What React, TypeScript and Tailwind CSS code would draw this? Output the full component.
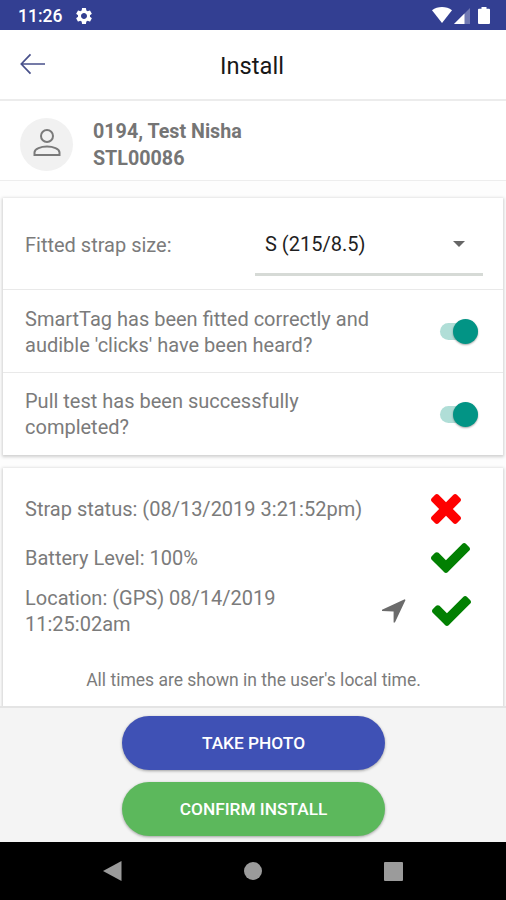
import type { ReactNode } from 'react';
import { MdSettings } from 'react-icons/md';

interface SwitchRowProps {
  lines: string[];
}

function CheckMark() {
  return (
    <svg viewBox="121 334 1550 1188" className="h-[30px] w-[39px] fill-[#028002]">
      <path d="M1671 566q0 40-28 68l-724 724-136 136q-28 28-68 28t-68-28l-136-136-362-362q-28-28-28-68t28-68l136-136q28-28 68-28t68 28l294 295 656-657q28-28 68-28t68 28l136 136q28 28 28 68z" />
    </svg>
  );
}

function CrossMark() {
  return (
    <svg viewBox="302 366 1188 1188" className="h-[30px] w-[30px] fill-[#fe0000]">
      <path d="M1490 1322q0 40-28 68l-136 136q-28 28-68 28t-68-28l-294-294-294 294q-28 28-68 28t-68-28l-136-136q-28-28-28-68t28-68l294-294-294-294q-28-28-28-68t28-68l136-136q28-28 68-28t68 28l294 294 294-294q28-28 68-28t68 28l136 136q28 28 28 68t-28 68l-294 294 294 294q28 28 28 68z" />
    </svg>
  );
}

function LocationArrow() {
  return (
    <svg viewBox="0 0 24 24" className="h-6 w-6 fill-[#6b6b6b]">
      <path d="M23.500.9 12.900 23.500h-1.300V12.400L0 12v-1.300L22.700.2z" />
    </svg>
  );
}

function StatusBar() {
  return (
    <div className="flex h-[30px] items-center justify-between bg-[#333f92] pl-[18px] pr-4 text-white">
      <div className="flex items-center gap-3 pt-0.5">
        <span className="pt-0.5 text-[17.5px] leading-none font-medium">11:26</span>
        <MdSettings className="h-5 w-5" />
      </div>
      <div className="flex items-center">
        <svg viewBox="0 0 20 16" className="h-4 w-5 fill-white">
          <path d="M0 3.2C5.6-1 14.4-1 20 3.2L10 16z" />
        </svg>
        <svg viewBox="0 0 16 16" className="ml-0.5 mt-px h-4 w-4 fill-white">
          <path d="M16 0v16H0z" opacity=".3" />
          <path d="M10.500 5.500V16H0z" />
        </svg>
        <svg viewBox="0 0 12 17" className="ml-2 h-[17px] w-3 fill-white">
          <path d="M3.500 0h5v1.800H11a1 1 0 0 1 1 1V16a1 1 0 0 1-1 1H1a1 1 0 0 1-1-1V2.800a1 1 0 0 1 1-1h2.500z" />
        </svg>
      </div>
    </div>
  );
}

function Header() {
  return (
    <header className="grid h-[71px] grid-cols-[80px_1fr_80px] items-center border-b-2 border-[#ececec] bg-white">
      <svg viewBox="0 0 26 22" className="mb-0.5 ml-5 h-[22px] w-[26px] fill-none stroke-[#48508a] stroke-[1.7]">
        <path d="M10.500 1.300 1.300 11l9.200 9.700M1.300 11H25" />
      </svg>
      <h1 className="pt-0.5 pr-0.5 text-center text-[23.7px] leading-7 text-[#181818]">Install</h1>
    </header>
  );
}

function Profile() {
  return (
    <div className="flex h-20 items-center border-b border-[#ededed] bg-white pl-5 pt-[7px]">
      <div className="flex h-[53px] w-[53px] items-center justify-center rounded-full bg-[#f1f1f1]">
        <svg viewBox="0 0 28 28" className="mb-[3px] h-7 w-7 fill-none stroke-[#7a7a7a] stroke-2">
          <circle cx="14" cy="7" r="6" />
          <path d="M1.500 26v-2.500c0-3.800 6.500-6 12.500-6s12.500 2.200 12.500 6V26z" />
        </svg>
      </div>
      <p className="ml-5 pt-px text-[19.7px] leading-[27px] font-bold text-[#757575]">
        0194, Test Nisha
        <br />
        STL00086
      </p>
    </div>
  );
}

function Card({ children, className }: { children: ReactNode; className: string }) {
  return (
    <section
      className={`mx-[3px] bg-white shadow-[0_1px_3px_1px_rgba(0,0,0,0.18)] ${className}`}
    >
      {children}
    </section>
  );
}

function SwitchRow({ lines }: SwitchRowProps) {
  return (
    <div className="flex h-[82.500px] items-center justify-between border-t border-[#e9e9e9] pl-[22px] pr-[25px] pt-0.5">
      <p className="leading-[26px]">
        {lines[0]}
        <br />
        {lines[1]}
      </p>
      <div className="flex h-[17px] w-[38px] items-center justify-end rounded-full bg-[#b0ded7]">
        <div className="h-[25px] w-[25px] shrink-0 rounded-full bg-[#029485] shadow-[0_1px_2px_rgba(0,0,0,0.35)]" />
      </div>
    </div>
  );
}

export default function App() {
  return (
    <div className="flex h-[900px] w-[506px] flex-col overflow-hidden bg-[#fdfdfd] font-['Roboto',sans-serif] text-[20px] text-[#7b7b7b]">
      <StatusBar />
      <Header />
      <Profile />

      <main className="flex-1 overflow-hidden pt-[17px]">
        <Card className="h-[257px]">
          <div className="flex h-[91px] items-center pl-[22px]">
            <span className="w-[230px] pt-0.5">Fitted strap size:</span>
            <div className="flex h-[65px] w-[228px] items-center justify-between border-b-[3px] border-[#d6dad6] pl-2.5 pr-[18px] pt-1 text-[#1f1f1f]">
              <span>S (215/8.5)</span>
              <span className="border-x-[6px] border-t-[6px] border-x-transparent border-t-[#666]" />
            </div>
          </div>
          <SwitchRow lines={['SmartTag has been fitted correctly and', "audible 'clicks' have been heard?"]} />
          <SwitchRow lines={['Pull test has been successfully', 'completed?']} />
        </Card>

        <Card className="mt-[13px] h-[238px] pl-[22px] pt-[17px]">
          <div className="flex h-12 items-center">
            <span className="w-[406px]">Strap status: (08/13/2019 3:21:52pm)</span>
            <CrossMark />
          </div>
          <div className="flex h-[50px] items-center">
            <span className="w-[406px]">Battery Level: 100%</span>
            <CheckMark />
          </div>
          <div className="flex h-[55px] items-center">
            <p className="w-[357px] pt-px leading-[26px]">
              Location: (GPS) 08/14/2019
              <br />
              11:25:02am
            </p>
            <LocationArrow />
            <div className="ml-[26px]">
              <CheckMark />
            </div>
          </div>
          <p className="mt-[30px] pr-[21px] text-center text-[17.500px] leading-6">
            All times are shown in the user's local time.
          </p>
        </Card>
      </main>

      <footer className="z-10 flex h-[136px] flex-col items-center gap-3 border-t-2 border-[#e4e4e4] bg-[#f4f4f4] pt-2 pl-px text-[17.3px] font-medium text-white">
        <button className="h-[54px] w-[263px] rounded-full bg-[#3f51b5] pt-0.5 shadow-[0_1px_3px_rgba(0,0,0,0.35)]">
          TAKE PHOTO
        </button>
        <button className="h-[54px] w-[263px] rounded-full bg-[#5cb85c] pt-0.5 shadow-[0_1px_3px_rgba(0,0,0,0.35)]">
          CONFIRM INSTALL
        </button>
      </footer>

      <nav className="flex h-[58px] items-center justify-between bg-black pl-[102px] pr-[103px]">
        <svg viewBox="0 0 20 20" className="h-5 w-5 fill-[#9b9b9b]">
          <path d="M19.500 0v20L1 10z" />
        </svg>
        <div className="h-[18px] w-[18px] rounded-full bg-[#9b9b9b]" />
        <div className="h-[19px] w-[19px] rounded-[1px] bg-[#9b9b9b]" />
      </nav>
    </div>
  );
}
